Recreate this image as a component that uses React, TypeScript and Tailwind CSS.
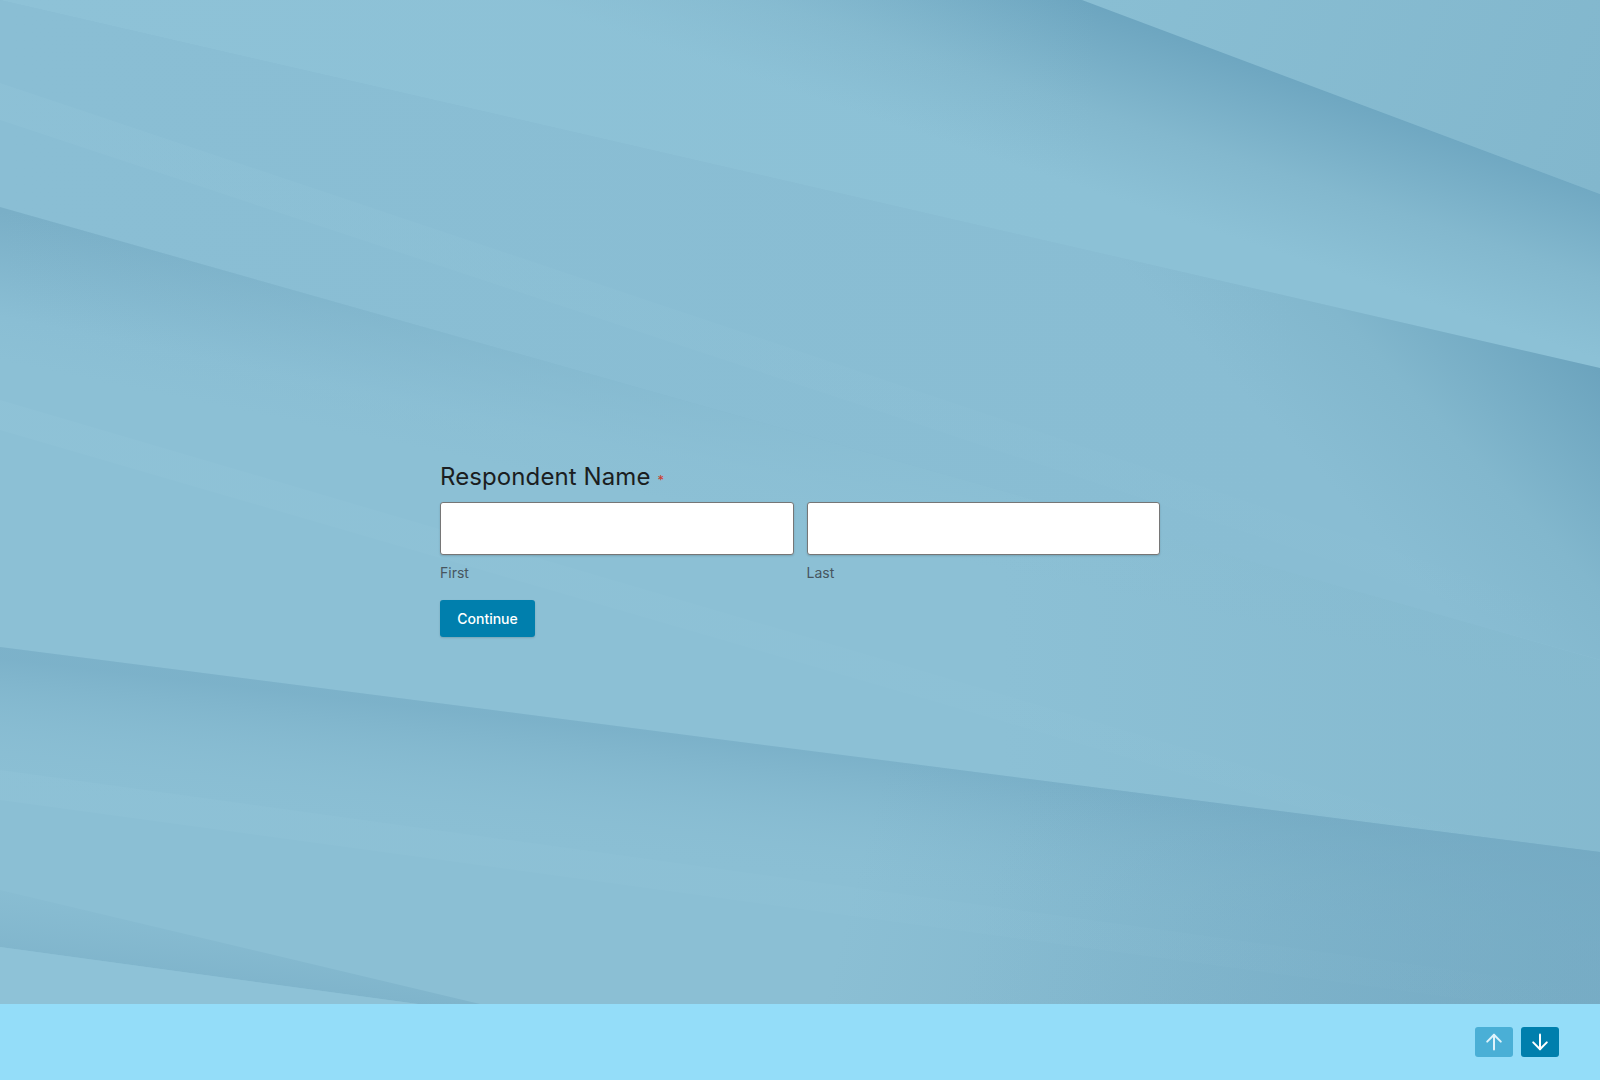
import React from "react";

function Background() {
  return (
    <svg
      className="absolute inset-0 h-full w-full"
      viewBox="0 0 1600 1004"
      preserveAspectRatio="none"
      aria-hidden="true"
    >
      <defs>
        <linearGradient id="gA" gradientUnits="userSpaceOnUse" x1="1330" y1="70" x2="1270" y2="250">
          <stop offset="0" stopColor="#6aa3be" />
          <stop offset="0.6" stopColor="#83b8ce" />
          <stop offset="1" stopColor="#8cc1d6" />
        </linearGradient>
        <linearGradient id="gA2" gradientUnits="userSpaceOnUse" x1="0" y1="0" x2="1100" y2="0">
          <stop offset="0" stopColor="#8ec2d7" stopOpacity="1" />
          <stop offset="1" stopColor="#8ec2d7" stopOpacity="0" />
        </linearGradient>
        <linearGradient id="gTop" gradientUnits="userSpaceOnUse" x1="1100" y1="0" x2="1600" y2="190">
          <stop offset="0" stopColor="#89bed3" />
          <stop offset="1" stopColor="#82b7cd" />
        </linearGradient>
        <linearGradient id="gB" gradientUnits="userSpaceOnUse" x1="1600" y1="372" x2="1400" y2="560">
          <stop offset="0" stopColor="#6ca4be" />
          <stop offset="0.55" stopColor="#82b7cd" />
          <stop offset="1" stopColor="#89bdd3" />
        </linearGradient>
        <linearGradient id="gB2" gradientUnits="userSpaceOnUse" x1="0" y1="0" x2="1300" y2="0">
          <stop offset="0" stopColor="#8abed4" stopOpacity="1" />
          <stop offset="1" stopColor="#8abed4" stopOpacity="0" />
        </linearGradient>
        <linearGradient id="gC" gradientUnits="userSpaceOnUse" x1="120" y1="236" x2="90" y2="380">
          <stop offset="0" stopColor="#7aafc7" />
          <stop offset="0.7" stopColor="#8abed4" />
          <stop offset="1" stopColor="#8cc0d5" />
        </linearGradient>
        <linearGradient id="gC2" gradientUnits="userSpaceOnUse" x1="0" y1="0" x2="900" y2="0">
          <stop offset="0" stopColor="#8cc0d5" stopOpacity="0" />
          <stop offset="1" stopColor="#8cc0d5" stopOpacity="0.8" />
        </linearGradient>
        <linearGradient id="gCr" gradientUnits="userSpaceOnUse" x1="1000" y1="0" x2="1600" y2="0">
          <stop offset="0" stopColor="#80b5cb" stopOpacity="0" />
          <stop offset="1" stopColor="#80b5cb" stopOpacity="0.6" />
        </linearGradient>
        <linearGradient id="gD" gradientUnits="userSpaceOnUse" x1="800" y1="752" x2="785" y2="880">
          <stop offset="0" stopColor="#76acc5" stopOpacity="0.7" />
          <stop offset="1" stopColor="#8bbfd4" stopOpacity="0" />
        </linearGradient>
        <linearGradient id="gDr" gradientUnits="userSpaceOnUse" x1="900" y1="700" x2="1600" y2="880">
          <stop offset="0" stopColor="#6ea5bf" stopOpacity="0" />
          <stop offset="1" stopColor="#6ea5bf" stopOpacity="0.65" />
        </linearGradient>
        <linearGradient id="gBR" gradientUnits="userSpaceOnUse" x1="1000" y1="850" x2="1600" y2="1004">
          <stop offset="0" stopColor="#76abc4" stopOpacity="0" />
          <stop offset="1" stopColor="#76abc4" stopOpacity="0.6" />
        </linearGradient>
        <linearGradient id="gG" gradientUnits="userSpaceOnUse" x1="300" y1="900" x2="290" y2="995">
          <stop offset="0" stopColor="#7aafc7" stopOpacity="0" />
          <stop offset="1" stopColor="#74aac3" stopOpacity="0.55" />
        </linearGradient>
        <linearGradient id="gL" gradientUnits="userSpaceOnUse" x1="0" y1="0" x2="1600" y2="0">
          <stop offset="0" stopColor="#96c8db" stopOpacity="0.25" />
          <stop offset="1" stopColor="#96c8db" stopOpacity="0" />
        </linearGradient>
      </defs>

      <rect x="0" y="0" width="1600" height="1004" fill="#8abed4" />
      <polygon points="1082,0 1600,0 1600,194" fill="url(#gTop)" />
      <polygon points="0,0 1082,0 1600,194 1600,368" fill="url(#gA)" />
      <polygon points="0,0 1082,0 1600,194 1600,368" fill="url(#gA2)" />
      <polygon points="0,0 1600,368 1600,660 0,207" fill="url(#gB)" />
      <polygon points="0,0 1600,368 1600,660 0,207" fill="url(#gB2)" />
      <polygon points="0,83 1600,620 1600,650 0,120" fill="url(#gL)" />
      <polygon points="0,207 1600,660 1600,852 0,647" fill="url(#gC)" />
      <polygon points="0,207 1600,660 1600,852 0,647" fill="url(#gC2)" />
      <polygon points="0,207 1600,660 1600,852 0,647" fill="url(#gCr)" />
      <polygon points="0,400 1600,870 1600,895 0,430" fill="url(#gL)" />
      <polygon points="0,647 1600,852 1600,1004 0,1004" fill="#8bbfd4" />
      <polygon points="0,647 1600,852 1600,1004 0,1004" fill="url(#gD)" />
      <polygon points="0,647 1600,852 1600,1004 0,1004" fill="url(#gDr)" />
      <polygon points="0,647 1600,852 1600,1004 0,1004" fill="url(#gBR)" />
      <polygon points="0,770 1600,990 1600,1004 1500,1004 0,800" fill="url(#gL)" />
      <polygon points="0,890 480,1004 418,1004 0,947" fill="url(#gG)" />
      <polygon points="0,947 418,1004 0,1004" fill="#8ec2d7" />
    </svg>
  );
}

function ArrowUp() {
  return (
    <svg width="18" height="18" viewBox="0 0 18 18" fill="none" stroke="currentColor" strokeWidth="2" strokeLinecap="round" strokeLinejoin="round">
      <path d="M9 16.5V1.8" />
      <path d="M2.2 8.6L9 1.8l6.8 6.8" />
    </svg>
  );
}

function ArrowDown() {
  return (
    <svg width="18" height="18" viewBox="0 0 18 18" fill="none" stroke="currentColor" strokeWidth="2" strokeLinecap="round" strokeLinejoin="round">
      <path d="M9 1.5v14.7" />
      <path d="M2.2 9.4L9 16.2l6.8-6.8" />
    </svg>
  );
}

export default function App() {
  return (
    <div
      className="flex h-screen w-full flex-col overflow-hidden"
      style={{ fontFamily: "Inter, 'Noto Sans', 'Liberation Sans', sans-serif" }}
    >
      <main className="relative flex-1">
        <Background />
        <div className="relative mx-auto w-[720px] pt-[461px]">
          <div className="flex items-baseline text-[24px] leading-[32px] text-[#1b1e21]">
            <span className="tracking-[0.1px]">Respondent Name</span>
            <span className="ml-[7px] text-[13px] leading-none text-[#d0392b]">*</span>
          </div>
          <div className="mt-[9px] grid grid-cols-2 gap-x-[13px]">
            <div className="flex flex-col">
              <input
                type="text"
                className="h-[53px] w-full rounded-[3px] border border-[#767676] bg-white shadow-[0_1px_2px_rgba(0,0,0,0.15)] outline-none"
              />
              <span className="mt-[8px] text-[14px] leading-[20px] text-[#47565f]">First</span>
            </div>
            <div className="flex flex-col">
              <input
                type="text"
                className="h-[53px] w-full rounded-[3px] border border-[#767676] bg-white shadow-[0_1px_2px_rgba(0,0,0,0.15)] outline-none"
              />
              <span className="mt-[8px] text-[14px] leading-[20px] text-[#47565f]">Last</span>
            </div>
          </div>
          <button
            type="button"
            className="mt-[17px] h-[37px] w-[95px] rounded-[3px] bg-[#007fad] text-[14px] font-medium text-white shadow-[0_1px_2px_rgba(0,0,0,0.15)]"
          >
            Continue
          </button>
        </div>
      </main>
      <footer className="flex h-[76px] shrink-0 items-center justify-end gap-[8px] bg-[#94ddf9] pr-[41px]">
        <button type="button" className="flex h-[30px] w-[38px] items-center justify-center rounded-[3px] bg-[#4aafd6] text-[#dff3fb]">
          <ArrowUp />
        </button>
        <button type="button" className="flex h-[30px] w-[38px] items-center justify-center rounded-[3px] bg-[#007fad] text-white">
          <ArrowDown />
        </button>
      </footer>
    </div>
  );
}
